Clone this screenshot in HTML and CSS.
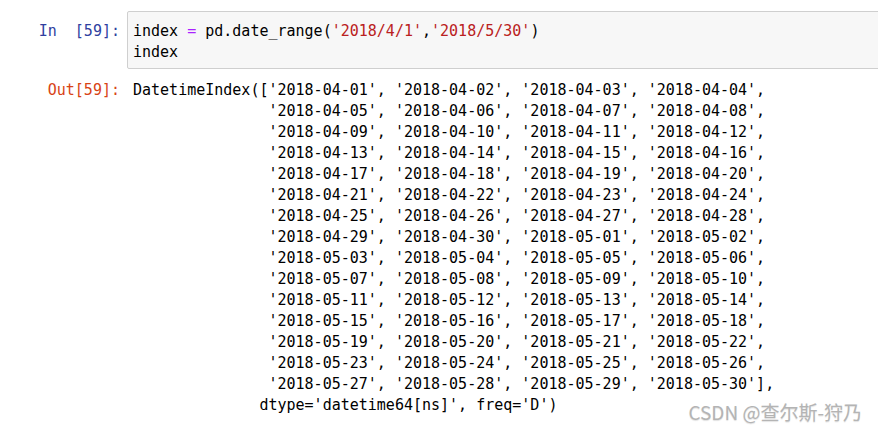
FILE: index.html
```html
<!DOCTYPE html>
<html lang="zh">
<head>
<meta charset="utf-8">
<title>Notebook</title>
<link rel="stylesheet" href="styles.css">
</head>
<body>
<div class="notebook">
  <div class="cell in-cell">
    <div class="prompt in-prompt">In&nbsp;&nbsp;[59]:</div>
    <div class="input-area"><pre class="code">index <span class="op">=</span> pd.date_range(<span class="str">'2018/4/1'</span>,<span class="str">'2018/5/30'</span>)
index</pre></div>
  </div>
  <div class="cell out-cell">
    <div class="prompt out-prompt">Out[59]:</div>
    <pre class="output">DatetimeIndex(['2018-04-01', '2018-04-02', '2018-04-03', '2018-04-04',
               '2018-04-05', '2018-04-06', '2018-04-07', '2018-04-08',
               '2018-04-09', '2018-04-10', '2018-04-11', '2018-04-12',
               '2018-04-13', '2018-04-14', '2018-04-15', '2018-04-16',
               '2018-04-17', '2018-04-18', '2018-04-19', '2018-04-20',
               '2018-04-21', '2018-04-22', '2018-04-23', '2018-04-24',
               '2018-04-25', '2018-04-26', '2018-04-27', '2018-04-28',
               '2018-04-29', '2018-04-30', '2018-05-01', '2018-05-02',
               '2018-05-03', '2018-05-04', '2018-05-05', '2018-05-06',
               '2018-05-07', '2018-05-08', '2018-05-09', '2018-05-10',
               '2018-05-11', '2018-05-12', '2018-05-13', '2018-05-14',
               '2018-05-15', '2018-05-16', '2018-05-17', '2018-05-18',
               '2018-05-19', '2018-05-20', '2018-05-21', '2018-05-22',
               '2018-05-23', '2018-05-24', '2018-05-25', '2018-05-26',
               '2018-05-27', '2018-05-28', '2018-05-29', '2018-05-30'],
              dtype='datetime64[ns]', freq='D')</pre>
  </div>
  <div class="watermark">CSDN @查尔斯-狩乃</div>
</div>
</body>
</html>
```
FILE: styles.css
```css
html, body {
  margin: 0;
  padding: 0;
  background: #ffffff;
  overflow: hidden;
}

.notebook {
  position: relative;
  width: 878px;
  height: 430px;
  padding-top: 11px;
  box-sizing: border-box;
}

.cell {
  display: flex;
  align-items: flex-start;
}

.prompt,
.code,
.output {
  font-family: "DejaVu Sans Mono", "Liberation Mono", monospace;
  font-size: 15px;
  line-height: 21px;
  white-space: pre;
  color: #000000;
  margin: 0;
}

.prompt {
  width: 120px;
  flex: 0 0 120px;
  text-align: right;
  box-sizing: border-box;
}

.in-prompt {
  color: #303f9f;
  padding-top: 10px;
}

.out-prompt {
  color: #d84315;
}

.input-area {
  flex: 1;
  margin-left: 7px;
  margin-right: -6px;
  background: #f7f7f7;
  border: 1px solid #cfcfcf;
  border-radius: 2px;
  padding: 9px 5px 5px 5px;
}

.op {
  color: #aa22ff;
}

.str {
  color: #ba2121;
}

.out-cell {
  margin-top: 11px;
}

.output {
  margin-left: 13px;
}

.watermark {
  position: absolute;
  right: 16px;
  top: 398px;
  font-family: "Noto Sans CJK SC", "Noto Sans", sans-serif;
  font-size: 19px;
  line-height: 28px;
  color: #b4b4b4;
  text-shadow: 0 1px 1px rgba(0, 0, 0, 0.12);
}
```
